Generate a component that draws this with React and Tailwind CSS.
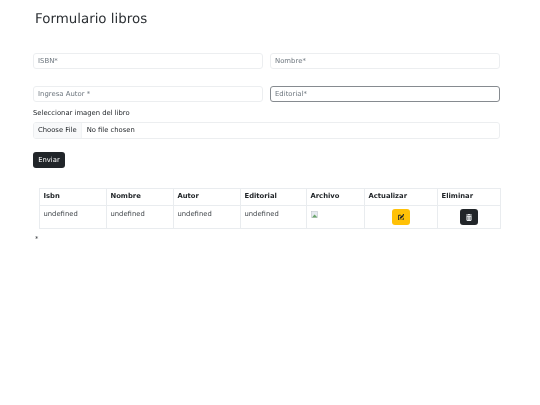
import { FaPenToSquare, FaTrashCan } from 'react-icons/fa6';

const cols = [
  { title: 'Isbn', width: 'w-[67px]' },
  { title: 'Nombre', width: 'w-[67px]' },
  { title: 'Autor', width: 'w-[67px]' },
  { title: 'Editorial', width: 'w-[66px]' },
  { title: 'Archivo', width: 'w-[58px]' },
  { title: 'Actualizar', width: 'w-[73px]' },
  { title: 'Eliminar', width: 'w-[62px]' },
];

function Field({ placeholder, focused }) {
  return (
    <div className={`h-4 flex-1 flex items-center px-[4px] rounded-[3px] border text-[6.9px] text-[#6c757d] bg-white ${focused ? 'border-[#868b90]' : 'border-[#eceef0]'}`}>
      {placeholder}
    </div>
  );
}

function Cell({ col, children, head }) {
  return (
    <div className={`${col.width} border-r border-[#e9ecef] pl-[3.5px] last:border-r-0 ${head ? 'h-[16px] pb-[2px] flex items-center font-bold text-[#212529]' : 'h-[22px] pt-[3px] text-[#3f4449]'}`}>
      {children}
    </div>
  );
}

export default function App() {
  return (
    <div className="w-[540px] h-[405px] bg-white overflow-hidden">
      <div className="h-full pl-[33px] pr-[40px] font-['DejaVu_Sans',sans-serif] text-[#212529] blur-[0.3px] [text-rendering:geometricPrecision]">
        <h1 className="pl-[2px] pt-[11px] text-[13.4px] leading-[17px] font-normal text-[#2b2f33]">Formulario libros</h1>

        <div className="flex gap-[7px] mt-[25px]">
          <Field placeholder="ISBN*" />
          <Field placeholder="Nombre*" />
        </div>
        <div className="flex gap-[7px] mt-[17px]">
          <Field placeholder="Ingresa Autor *" />
          <Field placeholder="Editorial*" focused />
        </div>

        <p className="mt-[6px] text-[6.8px] leading-[10px]">Seleccionar imagen del libro</p>
        <div className="mt-[4px] h-[17px] flex items-center rounded-[3px] border border-[#eceef0] text-[6.8px] overflow-hidden">
          <span className="h-full flex items-center px-[4px] bg-[#f8f9fa] border-r border-[#f1f3f5]">Choose File</span>
          <span className="pl-[5px]">No file chosen</span>
        </div>

        <button className="block mt-[13px] h-4 w-[32px] rounded-[3px] bg-[#212529] text-white text-[6.8px]">Enviar</button>

        <div className="ml-[6px] -mr-px mt-[20px] border border-[#e9ecef] text-[6.8px]">
          <div className="flex border-b border-[#e9ecef]">
            {cols.map((col) => (
              <Cell key={col.title} col={col} head>{col.title}</Cell>
            ))}
          </div>
          <div className="flex">
            {cols.slice(0, 4).map((col) => (
              <Cell key={col.title} col={col}>undefined</Cell>
            ))}
            <Cell col={cols[4]}>
              <svg width="7" height="7" viewBox="0 0 7 7" className="mt-[2px]">
                <rect x="0.5" y="0.5" width="6" height="6" fill="#e6eaf0" stroke="#b8bdc4" strokeWidth="0.5" />
                <path d="M1 6.5 L3.5 3.5 L6.5 6.5 Z" fill="#6aa36a" />
              </svg>
            </Cell>
            <div className={`${cols[5].width} border-r border-[#e9ecef] flex items-center justify-center`}>
              <button className="w-[18px] h-4 rounded-[3px] bg-[#ffc107] flex items-center justify-center text-[#212529]">
                <FaPenToSquare className="w-[6.5px] h-[6.5px]" />
              </button>
            </div>
            <div className={`${cols[6].width} flex items-center justify-center`}>
              <button className="w-[18px] h-4 rounded-[3px] bg-[#212529] flex items-center justify-center text-[#e9ecef]">
                <FaTrashCan className="w-[6px] h-[7px]" />
              </button>
            </div>
          </div>
        </div>
        <p className="pl-[2px] mt-[5px] text-[6.8px] leading-[10px]">*</p>
      </div>
    </div>
  );
}
